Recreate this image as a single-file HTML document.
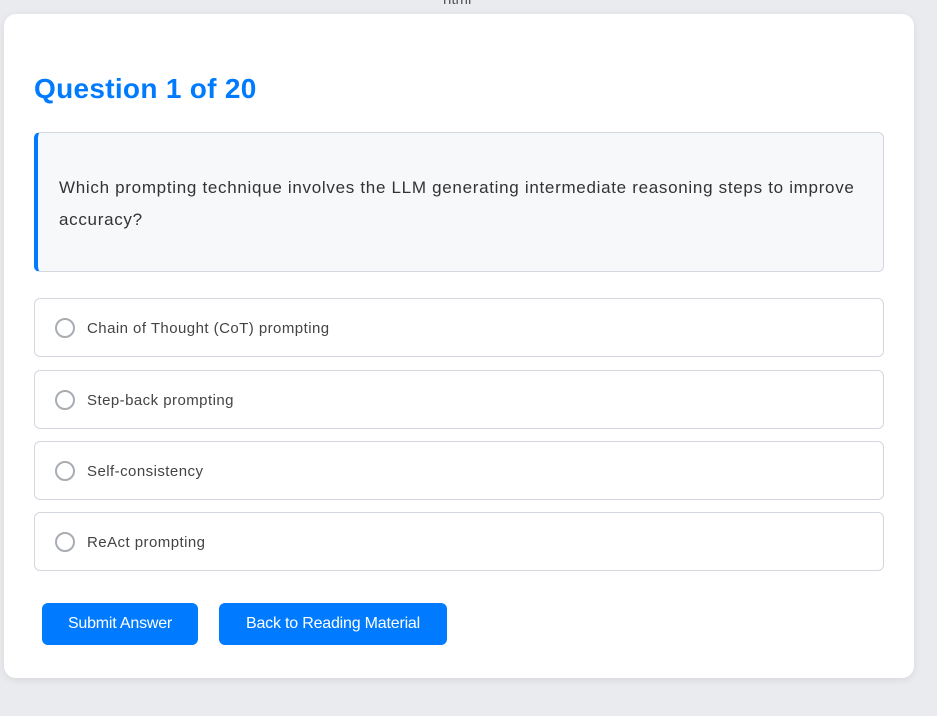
<!DOCTYPE html>
<html><head><style>
body{margin:0;background:#e9ebee;font-family:"Liberation Sans",sans-serif;width:937px;height:716px;overflow:hidden;position:relative}
.top{position:absolute;left:443px;top:-9px;font-size:15px;color:#555}
.card{position:absolute;left:4px;top:14px;width:910px;height:664px;background:#fff;border-radius:12px;box-shadow:0 2px 8px rgba(0,0,0,.08)}
h1{position:absolute;left:30px;top:59px;margin:0;font-size:28px;font-weight:bold;color:#007bff;letter-spacing:0.3px}
.q{position:absolute;left:30px;top:118px;width:845px;height:138px;background:#f7f8fa;border:1px solid #d3d8de;border-left:4px solid #007bff;border-radius:6px;box-sizing:content-box}
.q p{margin:0;position:absolute;left:21px;top:39px;right:20px;font-size:17px;line-height:32px;color:#333;letter-spacing:0.7px}
.opt{position:absolute;left:30px;width:848px;height:57px;border:1px solid #d3d8de;border-radius:6px}
.opt i{position:absolute;left:20px;top:19px;width:16px;height:16px;border:2px solid #a8adb3;border-radius:50%}
.opt span{position:absolute;left:52px;top:21px;font-size:15px;color:#444;letter-spacing:0.45px}
.btn{position:absolute;top:589px;height:42px;background:#007bff;color:#fff;border-radius:6px;font-size:16px;line-height:42px;text-align:center;letter-spacing:-0.2px}
</style></head><body>
<div class="top">html</div>
<div class="card">
<h1>Question 1 of 20</h1>
<div class="q"><p>Which prompting technique involves the LLM generating intermediate reasoning steps to improve accuracy?</p></div>
<div class="opt" style="top:284px"><i></i><span>Chain of Thought (CoT) prompting</span></div>
<div class="opt" style="top:356px"><i></i><span>Step-back prompting</span></div>
<div class="opt" style="top:427px"><i></i><span>Self-consistency</span></div>
<div class="opt" style="top:498px"><i></i><span>ReAct prompting</span></div>
<div class="btn" style="left:38px;width:156px">Submit Answer</div>
<div class="btn" style="left:215px;width:228px">Back to Reading Material</div>
</div>
</body></html>
